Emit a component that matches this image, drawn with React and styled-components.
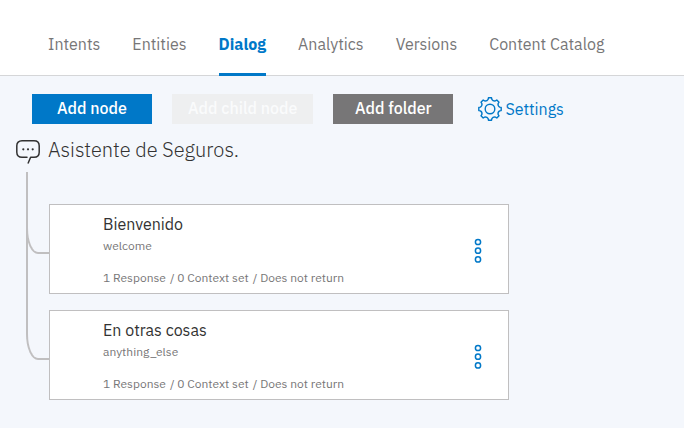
import React from "react";
import styled, { createGlobalStyle } from "styled-components";

const GlobalStyle = createGlobalStyle`
  *, *::before { box-sizing: border-box; }
  html { min-height: 100%; background: #f4f7fc; }
  body {
    margin: 0;
    font-family: "IBM Plex Sans", Roboto, sans-serif;
    font-size: 16px;
    color: #323232;
  }
  button { font: inherit; border: 0; padding: 0; cursor: pointer; }
`;

const TabBar = styled.nav`
  display: flex;
  gap: 32px;
  height: 76px;
  padding: 0 48px;
  background: #ffffff;
  border-bottom: 1px solid #d5d6d8;
`;

const Tab = styled.a`
  height: 76px;
  padding-top: 32px;
  line-height: 24px;
  white-space: nowrap;
  text-decoration: none;
  color: ${(p) => (p.$active ? "#0078c8" : "#777677")};
  font-weight: ${(p) => (p.$active ? 700 : 400)};
  border-bottom: 3px solid ${(p) => (p.$active ? "#0078c8" : "transparent")};
`;

const Toolbar = styled.div`
  display: flex;
  align-items: center;
  gap: 20px;
  padding: 18px 32px 0;
`;

const tones = {
  primary: { background: "#0078c8", color: "#ffffff" },
  neutral: { background: "#777677", color: "#ffffff" },
  disabled: { background: "#eeeff0", color: "#fafbfc" },
};

const ActionButton = styled.button`
  min-width: 120px;
  height: 30px;
  padding: 0 16px 2px;
  line-height: 28px;
  font-weight: 500;
  white-space: nowrap;
  background: ${(p) => tones[p.$tone].background};
  color: ${(p) => tones[p.$tone].color};
`;

const SettingsButton = styled.button`
  display: flex;
  align-items: center;
  gap: 3px;
  margin-left: 5px;
  height: 30px;
  background: none;
  color: #0078c8;
`;

const SkillHeading = styled.header`
  display: flex;
  align-items: flex-end;
  gap: 8px;
  padding: 12px 16px 8px;
`;

const SkillName = styled.h1`
  margin: 0;
  font-size: 20px;
  line-height: 28px;
  font-weight: 300;
`;

const NodeList = styled.ul`
  display: flex;
  flex-direction: column;
  gap: 16px;
  max-width: 509px;
  margin: 0;
  padding: 32px 0 28px 49px;
  list-style: none;
`;

const NodeCard = styled.li`
  position: relative;
  display: flex;
  align-items: center;
  justify-content: space-between;
  min-height: 90px;
  padding: 6px 21px 6px 53px;
  background: #ffffff;
  border: 1px solid #c0bfc0;

  &::before {
    content: "";
    position: absolute;
    left: -24px;
    top: -83px;
    width: 23px;
    height: 132px;
    border: solid #c0bfc0;
    border-width: 0 0 2px 2px;
    border-bottom-left-radius: 12px 26px;
    pointer-events: none;
  }

  &:first-child::before {
    top: -33px;
    height: 82px;
  }
`;

const NodeTitle = styled.h2`
  margin: 0 0 2px;
  font-size: 16px;
  line-height: 24px;
  font-weight: 400;
`;

const NodeText = styled.p`
  display: flex;
  flex-wrap: wrap;
  column-gap: 4px;
  margin: 0 0 ${(p) => (p.$spaced ? "16px" : "0")};
  font-size: 12px;
  line-height: 16px;
  color: #777677;
`;

const MenuButton = styled.button`
  display: flex;
  justify-content: center;
  width: 18px;
  margin-top: 4px;
  background: none;
`;

const Icon = styled.svg`
  flex: none;
  display: block;
  fill: none;
  stroke: ${(p) => p.$color};
  stroke-linecap: round;
  stroke-linejoin: round;
`;

function gearPath() {
  const point = (radius, degrees) => {
    const angle = (degrees * Math.PI) / 180;
    const x = 12 + radius * Math.sin(angle);
    const y = 12 - radius * Math.cos(angle);
    return `${x.toFixed(2)} ${y.toFixed(2)}`;
  };
  let path = `M${point(11.3, -8)}`;
  for (let a = 0; a < 360; a += 45) {
    path += `L${point(11.3, a + 8)}L${point(9.8, a + 11)}`;
    path += `Q${point(8.2, a + 22.5)} ${point(9.8, a + 34)}`;
    path += `L${point(11.3, a + 37)}`;
  }
  return `${path}Z`;
}

const GearIcon = () => (
  <Icon $color="#0078c8" width="24" height="24" viewBox="0 0 24 24" strokeWidth="1.4" aria-hidden="true">
    <path d={gearPath()} />
    <circle cx="12" cy="12" r="4.8" />
  </Icon>
);

const ChatIcon = () => (
  <Icon $color="#323232" width="24" height="24" viewBox="0 0 24 24" strokeWidth="1.5" aria-hidden="true">
    <path d="M11 17.3H6C2.7 17.3.8 15.4.8 12.3V5.8C.8 2.7 2.7.8 6 .8h12c3.3 0 5.2 1.9 5.2 5v6.5c0 3.1-1.9 5-5.2 5h-3.4L12.2 23" />
    <g fill="#323232" stroke="none">
      <circle cx="7.3" cy="9.3" r="1.1" />
      <circle cx="12" cy="9.3" r="1.1" />
      <circle cx="16.7" cy="9.3" r="1.1" />
    </g>
  </Icon>
);

const MoreIcon = () => (
  <Icon $color="#0078c8" width="8" height="26" viewBox="0 0 8 26" strokeWidth="1.5" aria-hidden="true">
    <circle cx="4" cy="4" r="2.6" />
    <circle cx="4" cy="12.7" r="2.6" />
    <circle cx="4" cy="21.4" r="2.6" />
  </Icon>
);

const tabs = ["Intents", "Entities", "Dialog", "Analytics", "Versions", "Content Catalog"];

const nodes = [
  { title: "Bienvenido", condition: "welcome" },
  { title: "En otras cosas", condition: "anything_else" },
];

export default function App() {
  return (
    <>
      <GlobalStyle />
      <TabBar>
        {tabs.map((name) => (
          <Tab key={name} href="#" $active={name === "Dialog"} aria-current={name === "Dialog" ? "page" : undefined}>
            {name}
          </Tab>
        ))}
      </TabBar>
      <main>
        <Toolbar>
          <ActionButton $tone="primary">Add node</ActionButton>
          <ActionButton $tone="disabled" disabled>Add child node</ActionButton>
          <ActionButton $tone="neutral">Add folder</ActionButton>
          <SettingsButton>
            <GearIcon />
            Settings
          </SettingsButton>
        </Toolbar>
        <SkillHeading>
          <ChatIcon />
          <SkillName>Asistente de Seguros.</SkillName>
        </SkillHeading>
        <NodeList>
          {nodes.map((node) => (
            <NodeCard key={node.title}>
              <div>
                <NodeTitle>{node.title}</NodeTitle>
                <NodeText $spaced>{node.condition}</NodeText>
                <NodeText>
                  <span>1 Response</span>
                  <span>/ 0 Context set</span>
                  <span>/ Does not return</span>
                </NodeText>
              </div>
              <MenuButton aria-label={`Options for ${node.title}`}>
                <MoreIcon />
              </MenuButton>
            </NodeCard>
          ))}
        </NodeList>
      </main>
    </>
  );
}
